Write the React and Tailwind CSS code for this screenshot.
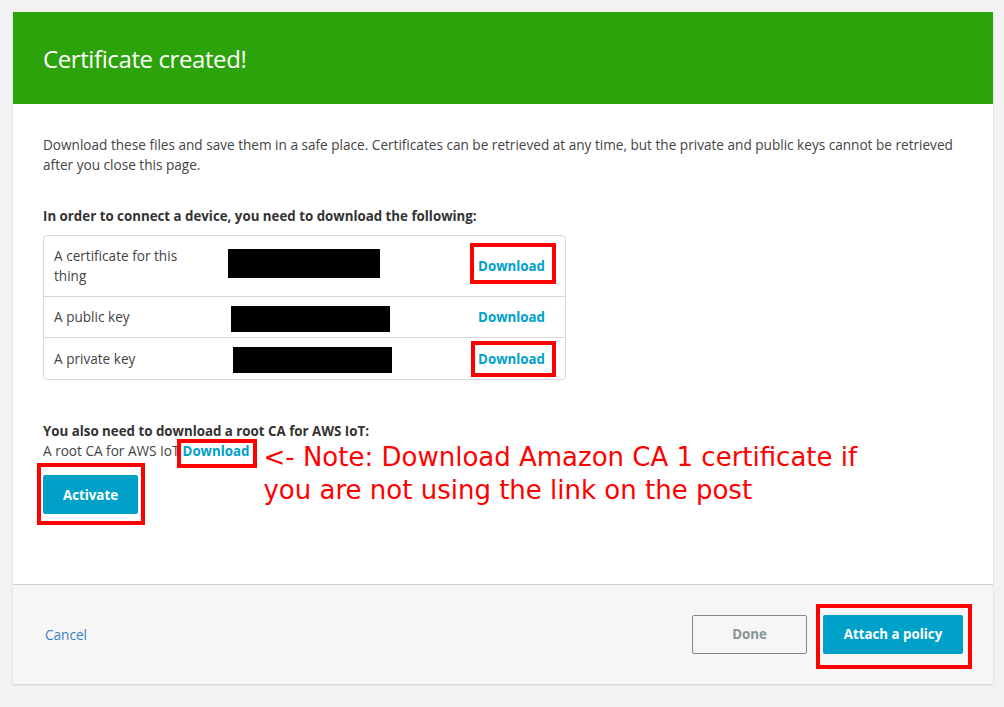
import React from "react";

const RedBox = ({ className }) => (
  <span className={"pointer-events-none absolute border-4 border-[#ff0000] " + className} />
);

export default function App() {
  const font = { fontFamily: '"Open Sans", "Noto Sans", sans-serif' };
  return (
    <div className="w-[1004px] h-[707px] bg-[#f2f2f2] pt-[12px] pl-[13px] overflow-hidden" style={font}>
      <div className="w-[980px] bg-white shadow-[0_1px_2px_rgba(0,0,0,0.15)]">
        <div className="h-[92px] bg-[#2ca30b] flex items-center pl-[30px]">
          <h1 className="text-[24px] text-white font-normal tracking-[-0.4px] mt-[1px]">Certificate created!</h1>
        </div>
        <div className="h-[480px] pl-[30px] pt-[31px] text-[13.6px] leading-[20px] text-[#444]">
          <p>
            Download these files and save them in a safe place. Certificates can be retrieved at any time, but the private and public keys cannot be retrieved
            <br />
            after you close this page.
          </p>
          <p className="mt-[31px] font-bold text-[13.3px] text-[#333]">In order to connect a device, you need to download the following:</p>
          <div className="mt-[9px] w-[523px] border border-[#d5dbdb] rounded-[4px]">
            <div className="h-[61px] flex items-center pl-[10px] pr-[20px] border-b border-[#d5dbdb]">
              <span className="w-[174px]">A certificate for this<br />thing</span>
              <span className="w-[152px] h-[29px] bg-black -mt-[6px]" />
              <span className="flex-1" />
              <span className="relative font-bold text-[13.3px] text-[#00a1c9]">
                Download
                <RedBox className="-left-[8px] -right-[11px] -top-[13px] -bottom-[8px]" />
              </span>
            </div>
            <div className="h-[41px] flex items-center pl-[10px] pr-[20px] border-b border-[#d5dbdb]">
              <span className="w-[177px]">A public key</span>
              <span className="w-[159px] h-[26px] bg-black mt-[3px]" />
              <span className="flex-1" />
              <span className="font-bold text-[13.3px] text-[#00a1c9]">Download</span>
            </div>
            <div className="h-[41px] flex items-center pl-[10px] pr-[20px]">
              <span className="w-[179px]">A private key</span>
              <span className="w-[159px] h-[26px] bg-black mt-[3px]" />
              <span className="flex-1" />
              <span className="relative font-bold text-[13.3px] text-[#00a1c9]">
                Download
                <RedBox className="-left-[7px] -right-[11px] -top-[8px] -bottom-[8px]" />
              </span>
            </div>
          </div>
          <p className="mt-[41px] font-bold text-[13.3px] text-[#333]">You also need to download a root CA for AWS IoT:</p>
          <div className="flex items-start">
            <div className="flex flex-col items-start">
              <div>
                A root CA for AWS IoT
                <span className="relative ml-[3px] font-bold text-[13.3px] text-[#00a1c9]">
                  Download
                  <RedBox className="-left-[6px] -right-[8px] -top-[3px] -bottom-[8px]" />
                </span>
              </div>
              <button className="relative mt-[14px] w-[95px] h-[39px] bg-[#00a1c9] text-white font-bold text-[13.3px] rounded-[2px]">
                Activate
                <RedBox className="-left-[6px] -right-[7px] -top-[12px] -bottom-[11px]" />
              </button>
            </div>
            <div
              className="ml-[14px] text-[26px] leading-[33px] text-[#ff0000]"
              style={{ fontFamily: '"DejaVu Sans", sans-serif' }}
            >
              &lt;- Note: Download Amazon CA 1 certificate if
              <br />
              you are not using the link on the post
            </div>
          </div>
        </div>
        <div className="border-t border-[#d0d0d0] bg-[#f6f6f6] h-[100px] flex items-center pl-[32px] pr-[30px] text-[13.6px]">
          <span className="text-[#3f80c2] mt-[1px]">Cancel</span>
          <span className="flex-1" />
          <button className="w-[115px] h-[39px] border border-[#888] rounded-[2px] bg-[#f6f6f6] text-[#879596] font-bold text-[13.3px]">
            Done
          </button>
          <button className="relative ml-[16px] w-[140px] h-[39px] bg-[#00a1c9] text-white font-bold text-[13.3px] rounded-[2px]">
            Attach a policy
            <RedBox className="-left-[7px] -right-[9px] -top-[11px] -bottom-[15px]" />
          </button>
        </div>
      </div>
    </div>
  );
}
